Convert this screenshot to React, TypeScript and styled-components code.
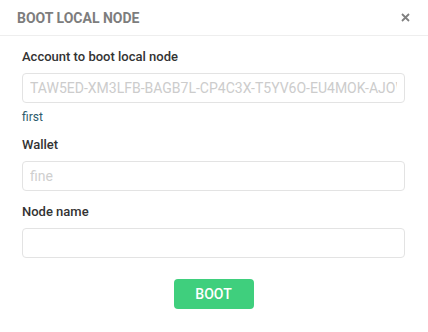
import React from "react";
import styled, { createGlobalStyle } from "styled-components";

const Global = createGlobalStyle`
  html, body { margin: 0; padding: 0; background: #fff; }
  body { font-family: Roboto, "Noto Sans", sans-serif; }
  * { box-sizing: border-box; }
`;

const Dialog = styled.div`
  width: 428px;
  height: 332px;
  background: #fff;
  display: flex;
  flex-direction: column;
`;

const Header = styled.div`
  height: 36px;
  display: flex;
  align-items: center;
  justify-content: space-between;
  padding: 0 17px 0 17px;
  border-bottom: 1px solid #eeeeee;
`;

const Title = styled.h1`
  margin: 0;
  font-size: 14px;
  font-weight: 700;
  color: #7d7d7d;
  letter-spacing: 0;
`;

const Close = styled.button`
  border: 0;
  background: none;
  padding: 0;
  width: 12px;
  height: 12px;
  display: flex;
  align-items: center;
  justify-content: center;
  cursor: pointer;
`;

const Body = styled.div`
  display: flex;
  flex-direction: column;
  padding: 12px 23px 0 22px;
`;

const Field = styled.div<{ $mb: number }>`
  display: flex;
  flex-direction: column;
  margin-bottom: ${(p) => p.$mb}px;
`;

const Label = styled.label`
  font-size: 13px;
  font-weight: 500;
  color: #333;
  line-height: 18px;
  margin-bottom: 7px;
`;

const Input = styled.input`
  width: 100%;
  height: 30px;
  border: 1px solid #e3e3e3;
  border-radius: 4px;
  padding: 0 7px;
  font-family: Roboto, "Noto Sans", sans-serif;
  font-size: 14px;
  color: #ccc;
  outline: none;
  background: #fff;
  &::placeholder { color: #cfcfcf; }
`;

const Hint = styled.div`
  font-size: 12px;
  color: #2d5b6b;
  margin-top: 7px;
  line-height: 14px;
`;

const Footer = styled.div`
  display: flex;
  justify-content: center;
`;

const BootButton = styled.button`
  width: 80px;
  height: 30px;
  border: 0;
  border-radius: 4px;
  background: #3fcf7d;
  color: #fff;
  font-family: Roboto, "Noto Sans", sans-serif;
  font-size: 14px;
  font-weight: 500;
  cursor: pointer;
`;

export default function App() {
  return (
    <>
      <Global />
      <Dialog>
        <Header>
          <Title>BOOT LOCAL NODE</Title>
          <Close aria-label="close">
            <svg width="9" height="9" viewBox="0 0 9 9">
              <path d="M1 1L8 8M8 1L1 8" stroke="#808080" strokeWidth="1.8" />
            </svg>
          </Close>
        </Header>
        <Body>
          <Field $mb={12}>
            <Label>Account to boot local node</Label>
            <Input readOnly value="TAW5ED-XM3LFB-BAGB7L-CP4C3X-T5YV6O-EU4MOK-AJOW" />
            <Hint>first</Hint>
          </Field>
          <Field $mb={12}>
            <Label>Wallet</Label>
            <Input placeholder="fine" />
          </Field>
          <Field $mb={21}>
            <Label>Node name</Label>
            <Input />
          </Field>
          <Footer>
            <BootButton>BOOT</BootButton>
          </Footer>
        </Body>
      </Dialog>
    </>
  );
}
